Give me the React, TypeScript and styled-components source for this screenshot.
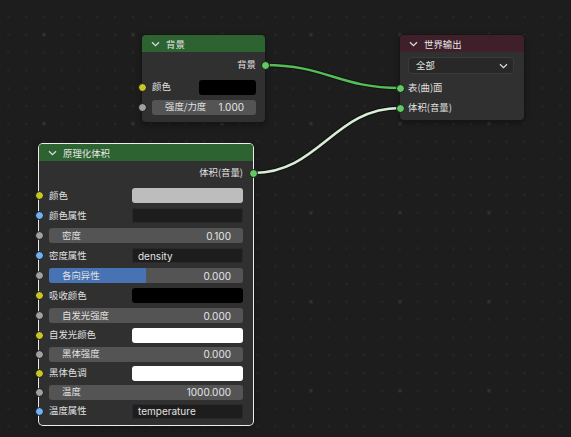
// ______________________________________________________
// 节点编辑器：世界着色节点

import React from "react";
import styled, { createGlobalStyle } from "styled-components";

// ______________________________________________________
// 型定义

type SocketKind = "color" | "float" | "string" | "shader";

type InputRow =
  | { kind: "color"; label: string; swatch: string }
  | { kind: "string"; label: string; text: string }
  | { kind: "float"; label: string; value: string; fill?: number };

const SOCKET_COLOR: Record<SocketKind, string> = {
  color: "#c7c729",
  float: "#a1a1a1",
  string: "#70b2f5",
  shader: "#63c763",
};

const volumeInputs: InputRow[] = [
  { kind: "color", label: "颜色", swatch: "#bdbdbd" },
  { kind: "string", label: "颜色属性", text: "" },
  { kind: "float", label: "密度", value: "0.100" },
  { kind: "string", label: "密度属性", text: "density" },
  { kind: "float", label: "各向异性", value: "0.000", fill: 0.5 },
  { kind: "color", label: "吸收颜色", swatch: "#000000" },
  { kind: "float", label: "自发光强度", value: "0.000" },
  { kind: "color", label: "自发光颜色", swatch: "#ffffff" },
  { kind: "float", label: "黑体强度", value: "0.000" },
  { kind: "color", label: "黑体色调", swatch: "#ffffff" },
  { kind: "float", label: "温度", value: "1000.000" },
  { kind: "string", label: "温度属性", text: "temperature" },
];

// ______________________________________________________
// 小部件

const Chevron = () => (
  <svg width="9" height="6" viewBox="0 0 9 6">
    <path d="M1 1.2 L4.5 4.7 L8 1.2" fill="none" stroke="#dadada" strokeWidth="1.3" />
  </svg>
);

const link = (x1: number, y1: number, x2: number, y2: number) => {
  const d = Math.abs(x2 - x1) * 0.45;
  return `M${x1} ${y1} C${x1 + d} ${y1} ${x2 - d} ${y2} ${x2} ${y2}`;
};

const Grid = () => (
  <Layer>
    <defs>
      <pattern id="dots" patternUnits="userSpaceOnUse" x="35.1" y="25.8" width="89" height="89">
        {[0, 1, 2, 3, 4].map((i) =>
          [0, 1, 2, 3, 4].map((j) =>
            i === 0 && j === 0 ? (
              <rect key={`${i}-${j}`} x={8.9 - 1.6} y={8.9 - 1.6} width="3.2" height="3.2" fill="#323232" />
            ) : (
              <rect key={`${i}-${j}`} x={8.9 + 17.8 * i - 1} y={8.9 + 17.8 * j - 1} width="2" height="2" fill="#282828" />
            )
          )
        )}
      </pattern>
    </defs>
    <rect width="100%" height="100%" fill="url(#dots)" />
  </Layer>
);

const Links = () => (
  <Layer>
    <path d={link(265, 65, 400, 88)} fill="none" stroke="#121212" strokeWidth="4.5" />
    <path d={link(265, 65, 400, 88)} fill="none" stroke="#55bd55" strokeWidth="2.4" />
    <path d={link(253, 173, 400, 108)} fill="none" stroke="#121212" strokeWidth="4.8" />
    <path d={link(253, 173, 400, 108)} fill="none" stroke="#d9eed7" strokeWidth="2.6" />
  </Layer>
);

const Input = ({ row, h, swatchW }: { row: InputRow; h: number; swatchW: number }) => (
  <Row $h={h}>
    <Socket $kind={row.kind} $side="left" />
    {row.kind === "float" ? (
      <Slider>
        {row.fill !== undefined && <SliderFill style={{ width: `${row.fill * 100}%` }} />}
        <Label>{row.label}</Label>
        <Value>{row.value}</Value>
      </Slider>
    ) : (
      <>
        <Label>{row.label}</Label>
        {row.kind === "color" ? (
          <Swatch $color={row.swatch} $w={swatchW} />
        ) : (
          <TextField $w={swatchW}>{row.text}</TextField>
        )}
      </>
    )}
  </Row>
);

// ______________________________________________________
// コンポーネント

const App = () => (
  <>
    <GlobalStyle />
    <Canvas>
      <Grid />
      <Links />

      <Node $x={142} $y={35} $w={123} $padL={10} $padR={9}>
        <Header $color="#2d6331">
          <Chevron />
          背景
        </Header>
        <Body $pt={3} $pb={5}>
          <Row $h={20} $end>
            <Label>背景</Label>
            <Socket $kind="shader" $side="right" />
          </Row>
          <Spacer $h={2} />
          <Input row={{ kind: "color", label: "颜色", swatch: "#000000" }} h={20} swatchW={57} />
          <Input row={{ kind: "float", label: "强度/力度", value: "1.000" }} h={20} swatchW={57} />
        </Body>
      </Node>

      <Node $x={400} $y={35} $w={124} $padL={8} $padR={10}>
        <Header $color="#3f1f2a">
          <Chevron />
          世界输出
        </Header>
        <Body $pt={3} $pb={2}>
          <Row $h={21}>
            <Dropdown>
              <Label>全部</Label>
              <Chevron />
            </Dropdown>
          </Row>
          <Spacer $h={2} />
          <Row $h={20}>
            <Socket $kind="shader" $side="left" />
            <Label>表(曲)面</Label>
          </Row>
          <Row $h={20}>
            <Socket $kind="shader" $side="left" />
            <Label>体积(音量)</Label>
          </Row>
        </Body>
      </Node>

      <Node $x={39} $y={144} $w={214} $padL={10} $padR={10} $active>
        <Header $color="#2d6331">
          <Chevron />
          原理化体积
        </Header>
        <Body $pt={2} $pb={4.3}>
          <Row $h={20} $end>
            <Label>体积(音量)</Label>
            <Socket $kind="shader" $side="right" />
          </Row>
          <Spacer $h={2.7} />
          {volumeInputs.map((row, i) => (
            <Input key={row.label} row={row} h={i < 7 ? 20 : 19} swatchW={111} />
          ))}
        </Body>
      </Node>
    </Canvas>
  </>
);

// ______________________________________________________
// スタイル

const GlobalStyle = createGlobalStyle`
  html, body {
    margin: 0;
    padding: 0;
    background: #1d1d1d;
    overflow: hidden;
  }
  body {
    font-family: "Inter", "Noto Sans CJK SC", sans-serif;
  }
`;

const Canvas = styled.div`
  position: relative;
  width: 571px;
  height: 437px;
  background: #1d1d1d;
  overflow: hidden;
`;

const Layer = styled.svg`
  position: absolute;
  left: 0;
  top: 0;
  width: 100%;
  height: 100%;
  pointer-events: none;
`;

const Node = styled.div<{ $x: number; $y: number; $w: number; $padL: number; $padR: number; $active?: boolean }>`
  position: absolute;
  left: ${(p) => p.$x}px;
  top: ${(p) => p.$y}px;
  width: ${(p) => p.$w}px;
  --pad-l: ${(p) => p.$padL}px;
  --pad-r: ${(p) => p.$padR}px;
  background: #303030;
  border-radius: 4px;
  box-shadow: 0 0 0 1px ${(p) => (p.$active ? "#ededed" : "#161616")}, 0 2px 6px rgba(0, 0, 0, 0.45);
`;

const Header = styled.div<{ $color: string }>`
  height: 17px;
  display: flex;
  align-items: center;
  gap: 6px;
  padding-left: 9px;
  background: ${(p) => p.$color};
  border-radius: 4px 4px 0 0;
  color: #e8e8e8;
  font-family: "Noto Sans CJK SC", sans-serif;
  font-size: 9.4px;
  white-space: nowrap;
`;

const Body = styled.div<{ $pt: number; $pb: number }>`
  display: flex;
  flex-direction: column;
  padding: ${(p) => p.$pt}px 0 ${(p) => p.$pb}px;
`;

const Spacer = styled.div<{ $h: number }>`
  height: ${(p) => p.$h}px;
`;

const Row = styled.div<{ $h: number; $end?: boolean }>`
  position: relative;
  height: ${(p) => p.$h}px;
  display: flex;
  align-items: center;
  justify-content: ${(p) => (p.$end ? "flex-end" : "flex-start")};
  padding: 0 var(--pad-r) 0 var(--pad-l);
`;

const Socket = styled.span<{ $kind: SocketKind; $side: "left" | "right" }>`
  position: absolute;
  top: 50%;
  ${(p) => p.$side}: -4.5px;
  width: 7px;
  height: 7px;
  margin-top: -4.5px;
  border-radius: 50%;
  border: 1px solid #141414;
  background: ${(p) => SOCKET_COLOR[p.$kind]};
`;

const Label = styled.span`
  position: relative;
  font-family: "Noto Sans CJK SC", sans-serif;
  font-size: 9.4px;
  line-height: 1;
  color: #e0e0e0;
  white-space: nowrap;
`;

const Value = styled.span`
  position: relative;
  font-family: "Inter", sans-serif;
  font-size: 10px;
  line-height: 1;
  color: #e6e6e6;
`;

const Swatch = styled.div<{ $color: string; $w: number }>`
  margin-left: auto;
  width: ${(p) => p.$w}px;
  height: 15px;
  border-radius: 3px;
  background: ${(p) => p.$color};
`;

const TextField = styled.div<{ $w: number }>`
  margin-left: auto;
  box-sizing: border-box;
  width: ${(p) => p.$w}px;
  height: 15px;
  display: flex;
  align-items: center;
  padding-left: 6px;
  border-radius: 3px;
  background: #1d1d1d;
  box-shadow: inset 0 0 0 1px #2a2a2a;
  font-family: "Inter", sans-serif;
  font-size: 10px;
  color: #e2e2e2;
`;

const Slider = styled.div`
  position: relative;
  flex: 1;
  height: 15px;
  display: flex;
  align-items: center;
  justify-content: space-between;
  padding: 0 12px 0 13px;
  border-radius: 3px;
  background: #545454;
  overflow: hidden;
`;

const SliderFill = styled.div`
  position: absolute;
  left: 0;
  top: 0;
  bottom: 0;
  background: #4772b3;
`;

const Dropdown = styled.div`
  flex: 1;
  box-sizing: border-box;
  height: 17px;
  display: flex;
  align-items: center;
  justify-content: space-between;
  padding: 0 5px 0 7px;
  border-radius: 4px;
  background: #282828;
  border: 1px solid #3b3b3b;
`;

export default App;
